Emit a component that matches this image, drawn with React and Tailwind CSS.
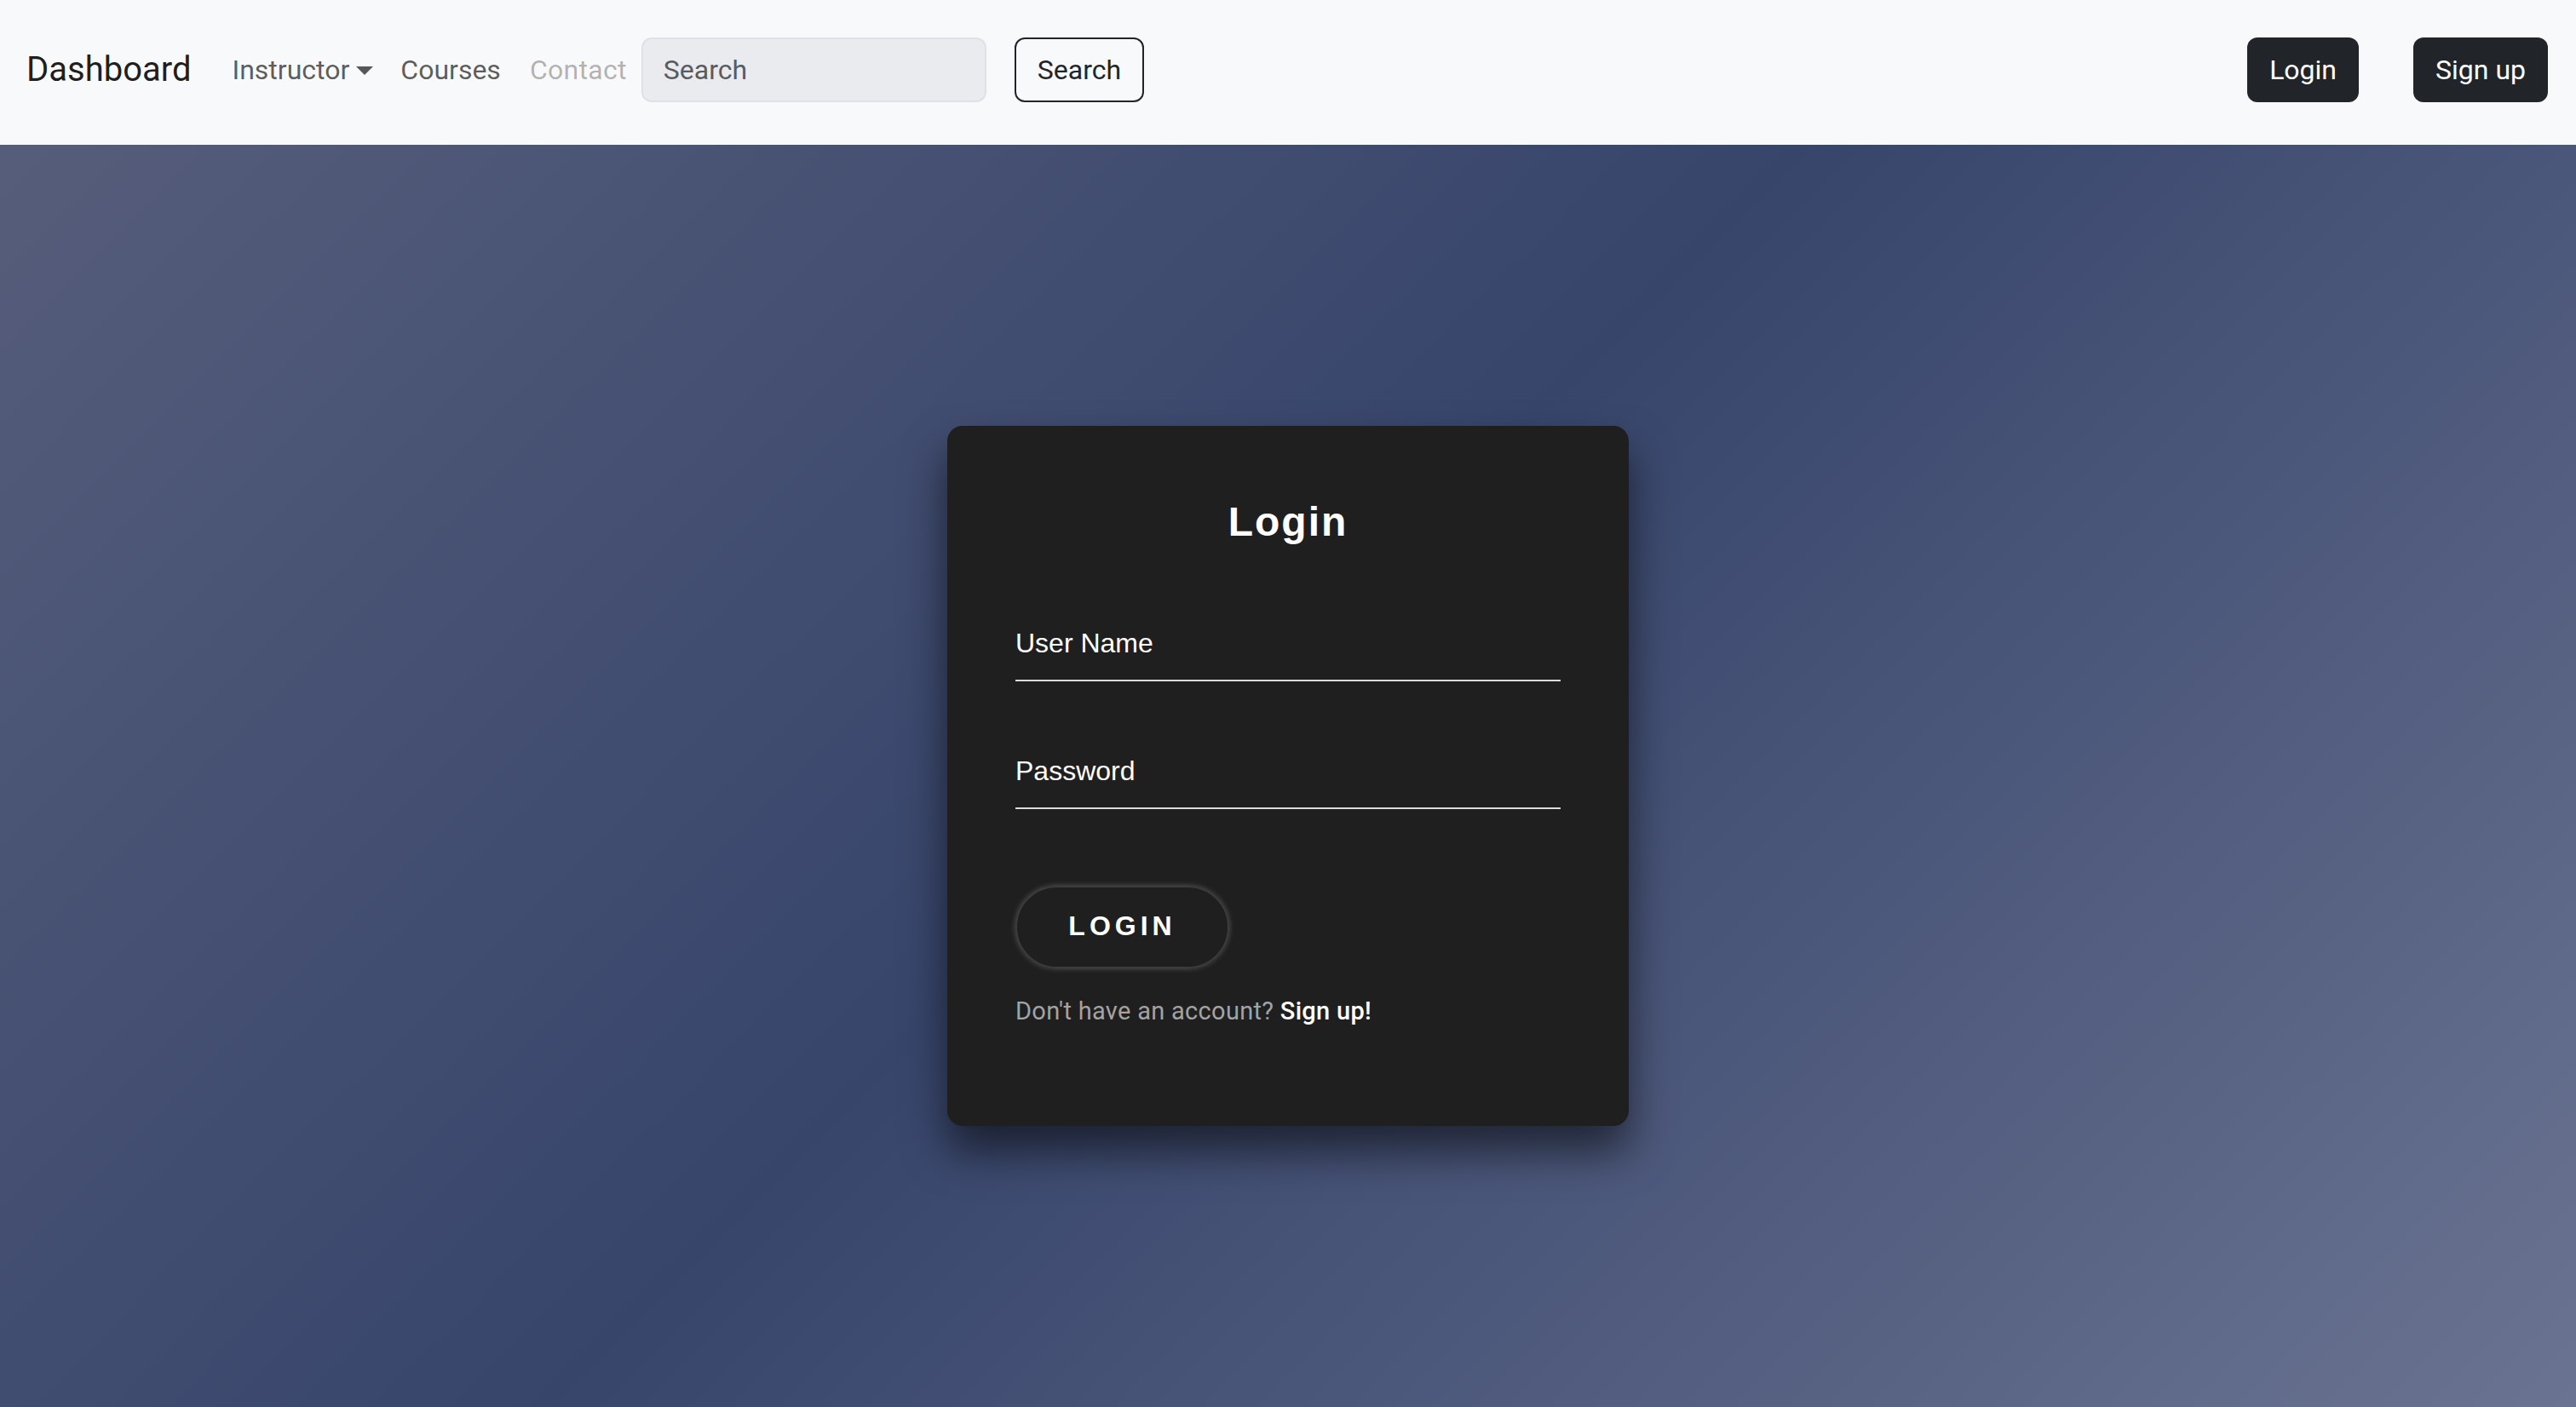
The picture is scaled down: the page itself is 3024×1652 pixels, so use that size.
const sans = { fontFamily: "Roboto, 'Liberation Sans', sans-serif" };

function Navbar() {
  return (
    <nav className="h-[170px] shrink-0 bg-[#f8f9fa] flex items-center pl-[31px] pr-[33px] pb-[6px] font-[Roboto,'Liberation_Sans',sans-serif]">
      <a className="text-[40px] leading-[60px] text-[rgba(0,0,0,0.9)] mr-[32px]">Dashboard</a>
      <ul className="flex items-center text-[32px] leading-[48px]">
        <li className="px-[16px] flex items-center text-[rgba(0,0,0,0.65)]">
          Instructor
          <span className="ml-[8px] mt-[2px] w-0 h-0 border-t-[10px] border-t-[rgba(0,0,0,0.65)] border-x-[10px] border-x-transparent" />
        </li>
        <li className="px-[16px] text-[rgba(0,0,0,0.65)]">Courses</li>
        <li className="pl-[18px] pr-[17px] text-[rgba(0,0,0,0.3)] tracking-[0.3px]">Contact</li>
      </ul>
      <form className="flex items-center">
        <input
          placeholder="Search"
          className="w-[405px] h-[76px] px-[24px] text-[32px] bg-[#eaebef] border-2 border-[#dee2e6] rounded-[12px] text-[#212529] placeholder:text-[#595c5f] outline-none"
        />
        <button
          type="button"
          className="ml-[33px] h-[76px] px-[25px] text-[32px] text-[#212529] border-2 border-[#212529] rounded-[12px]"
        >
          Search
        </button>
      </form>
      <div className="ml-auto flex items-center gap-[64px]">
        <button className="h-[76px] px-[26px] text-[32px] text-white bg-[#212529] rounded-[12px]">Login</button>
        <button className="h-[76px] px-[26px] text-[32px] text-white bg-[#212529] rounded-[12px]">Sign up</button>
      </div>
    </nav>
  );
}

function Field({ label, className }) {
  return (
    <div className={"border-b-2 border-[#dcdcdc] pb-[24px] " + className}>
      <label className="block text-[32px] leading-[38px] text-white font-['Liberation_Sans',Arial,sans-serif]">{label}</label>
    </div>
  );
}

export default function App() {
  return (
    <div className="h-[1652px] flex flex-col" style={sans}>
      <Navbar />
      <main className="flex-1 flex items-center justify-center bg-[linear-gradient(135deg,#555d7a_0%,#37456b_47%,#6a7391_100%)]">
        <div className="w-[800px] h-[822px] bg-[#1f1f1f] rounded-[18px] px-[80px] pt-[80px] shadow-[0_30px_50px_rgba(0,0,0,0.55)] flex flex-col">
          <h2 className="text-center text-[48px] leading-[66px] font-bold tracking-[2px] text-white font-['Liberation_Sans',Arial,sans-serif]">
            Login
          </h2>
          <Field label="User Name" className="mt-[90px]" />
          <Field label="Password" className="mt-[86px]" />
          <div className="mt-[90px]">
            <button className="w-[251px] h-[97px] pb-[4px] rounded-full border-2 border-[#3c3c3c] shadow-[0_0_6px_rgba(255,255,255,0.25)] text-white text-[32px] font-bold tracking-[5px] font-['Liberation_Sans',Arial,sans-serif]">
              LOGIN
            </button>
          </div>
          <p className="mt-[30px] text-[29px] leading-[40px] tracking-[0.3px] text-[#a3a3a3]">
            Don't have an account? <a className="text-white font-medium">Sign up!</a>
          </p>
        </div>
      </main>
    </div>
  );
}
